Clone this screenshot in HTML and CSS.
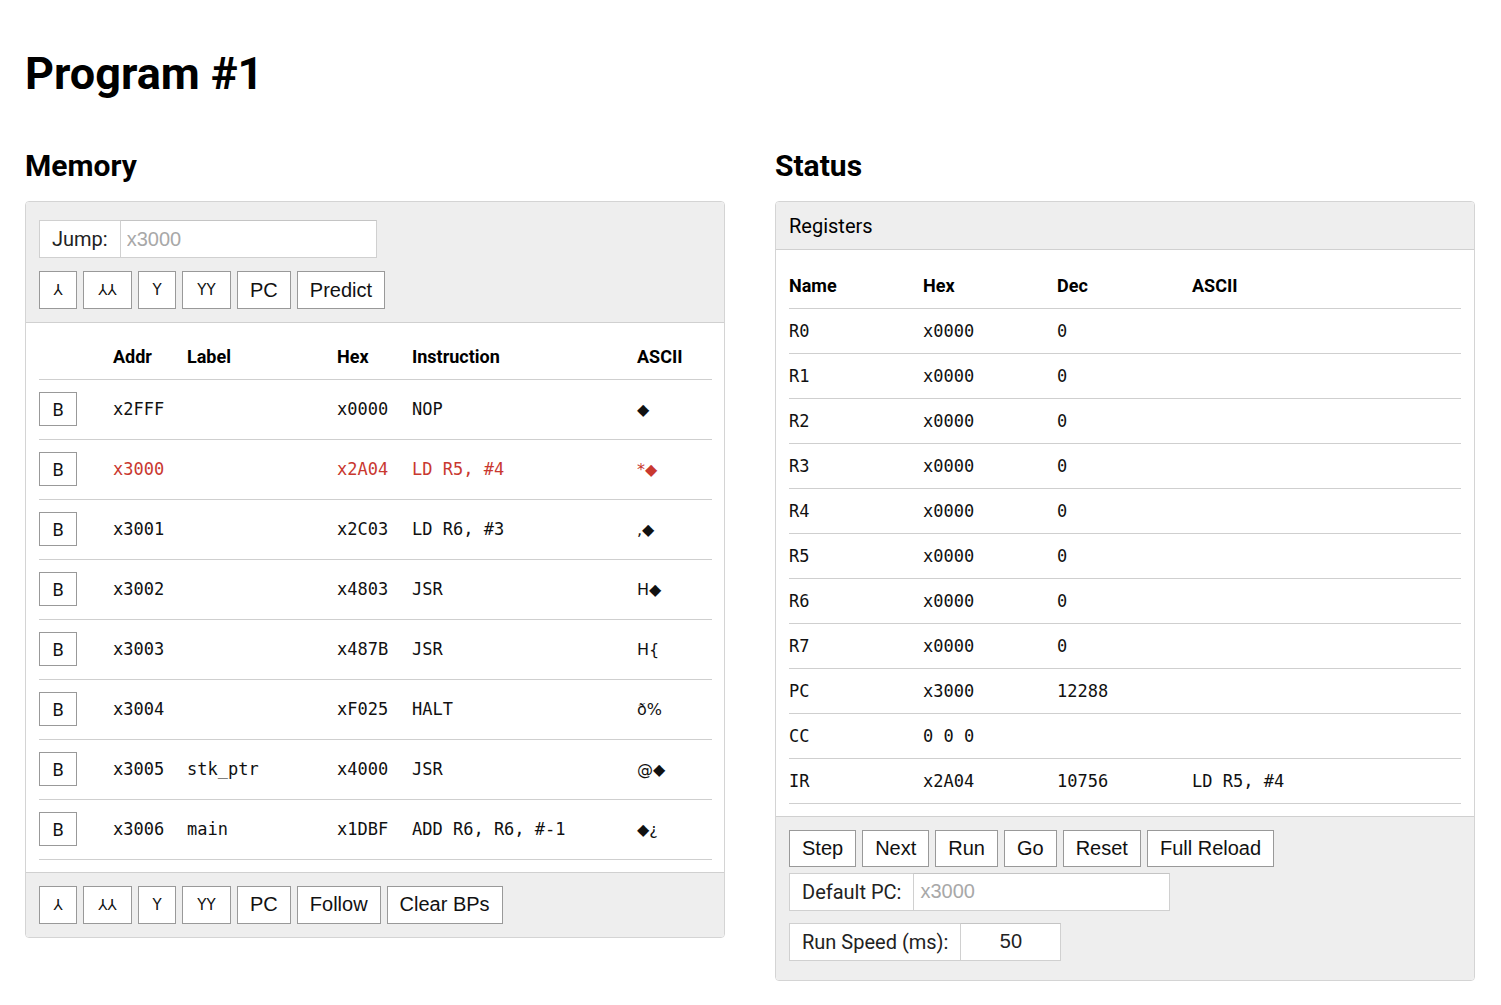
FILE: index.html
```html
<!DOCTYPE html>
<html>
<head>
<meta charset="utf-8">
<link rel="stylesheet" href="styles.css">
</head>
<body>
<h1 class="title">Program #1</h1>
<div class="cols">
  <section class="col">
    <h2 class="heading">Memory</h2>
    <div class="panel">
      <div class="panel-top">
        <div class="group">
          <span class="group-label">Jump:</span>
          <input class="group-input" placeholder="x3000">
        </div>
        <div class="btnrow">
          <button class="btn sym">⅄</button><button class="btn sym wide">⅄⅄</button><button class="btn sym">Y</button><button class="btn sym wide">YY</button><button class="btn">PC</button><button class="btn">Predict</button>
        </div>
      </div>
      <div class="panel-body mem-body">
        <table class="mem">
          <colgroup><col class="c-b"><col class="c-addr"><col class="c-label"><col class="c-hex"><col class="c-ins"><col class="c-asc"></colgroup>
          <thead><tr><th></th><th>Addr</th><th>Label</th><th>Hex</th><th>Instruction</th><th>ASCII</th></tr></thead>
          <tbody>
            <tr><td><button class="bp">B</button></td><td>x2FFF</td><td></td><td>x0000</td><td>NOP</td><td class="asc">◆</td></tr>
            <tr class="cur"><td><button class="bp">B</button></td><td>x3000</td><td></td><td>x2A04</td><td>LD R5, #4</td><td class="asc">*◆</td></tr>
            <tr><td><button class="bp">B</button></td><td>x3001</td><td></td><td>x2C03</td><td>LD R6, #3</td><td class="asc">,◆</td></tr>
            <tr><td><button class="bp">B</button></td><td>x3002</td><td></td><td>x4803</td><td>JSR</td><td class="asc">H◆</td></tr>
            <tr><td><button class="bp">B</button></td><td>x3003</td><td></td><td>x487B</td><td>JSR</td><td class="asc">H{</td></tr>
            <tr><td><button class="bp">B</button></td><td>x3004</td><td></td><td>xF025</td><td>HALT</td><td class="asc">ð%</td></tr>
            <tr><td><button class="bp">B</button></td><td>x3005</td><td>stk_ptr</td><td>x4000</td><td>JSR</td><td class="asc">@◆</td></tr>
            <tr><td><button class="bp">B</button></td><td>x3006</td><td>main</td><td>x1DBF</td><td>ADD R6, R6, #-1</td><td class="asc">◆¿</td></tr>
          </tbody>
        </table>
      </div>
      <div class="panel-foot">
        <div class="btnrow">
          <button class="btn sym">⅄</button><button class="btn sym wide">⅄⅄</button><button class="btn sym">Y</button><button class="btn sym wide">YY</button><button class="btn">PC</button><button class="btn">Follow</button><button class="btn">Clear BPs</button>
        </div>
      </div>
    </div>
  </section>
  <section class="col">
    <h2 class="heading">Status</h2>
    <div class="panel">
      <div class="panel-head">Registers</div>
      <div class="panel-body reg-body">
        <table class="reg">
          <colgroup><col class="r1"><col class="r2"><col class="r3"><col></colgroup>
          <thead><tr><th>Name</th><th>Hex</th><th>Dec</th><th>ASCII</th></tr></thead>
          <tbody>
            <tr><td>R0</td><td>x0000</td><td>0</td><td></td></tr>
            <tr><td>R1</td><td>x0000</td><td>0</td><td></td></tr>
            <tr><td>R2</td><td>x0000</td><td>0</td><td></td></tr>
            <tr><td>R3</td><td>x0000</td><td>0</td><td></td></tr>
            <tr><td>R4</td><td>x0000</td><td>0</td><td></td></tr>
            <tr><td>R5</td><td>x0000</td><td>0</td><td></td></tr>
            <tr><td>R6</td><td>x0000</td><td>0</td><td></td></tr>
            <tr><td>R7</td><td>x0000</td><td>0</td><td></td></tr>
            <tr><td>PC</td><td>x3000</td><td>12288</td><td></td></tr>
            <tr><td>CC</td><td>0 0 0</td><td></td><td></td></tr>
            <tr><td>IR</td><td>x2A04</td><td>10756</td><td>LD R5, #4</td></tr>
          </tbody>
        </table>
      </div>
      <div class="panel-foot status-foot">
        <div class="btnrow">
          <button class="btn">Step</button><button class="btn">Next</button><button class="btn">Run</button><button class="btn">Go</button><button class="btn">Reset</button><button class="btn">Full Reload</button>
        </div>
        <div class="group">
          <span class="group-label">Default PC:</span>
          <input class="group-input" placeholder="x3000">
        </div>
        <div class="group speed">
          <span class="group-label">Run Speed (ms):</span>
          <input class="group-input small" value="50">
        </div>
      </div>
    </div>
  </section>
</div>
</body>
</html>
```
FILE: styles.css
```css
* { box-sizing: border-box; }
body {
  margin: 0;
  padding: 0 25px;
  font-family: Roboto, "Liberation Sans", sans-serif;
  color: #000;
  background: #fff;
}
.title {
  font-size: 45px;
  font-weight: 700;
  margin: 47px 0 0 0;
  line-height: 54px;
}
.cols {
  display: grid;
  grid-template-columns: 700px 700px;
  column-gap: 50px;
  margin-top: 47px;
}
.heading {
  font-size: 30px;
  font-weight: 700;
  margin: 0 0 17px 0;
  line-height: 36px;
}
.panel {
  border: 1px solid #d4d4d4;
  border-radius: 4px;
  background: #fff;
  overflow: hidden;
}
.panel-top {
  background: #eeeeee;
  padding: 18px 13px 13px;
  border-bottom: 1px solid #d0d0d0;
}
.panel-head {
  background: #eeeeee;
  height: 48px;
  padding: 0 13px;
  display: flex;
  align-items: center;
  font-size: 20px;
  border-bottom: 1px solid #d0d0d0;
}
.group {
  display: flex;
  height: 38px;
}
.group-label {
  display: flex;
  align-items: center;
  padding: 0 12px;
  background: #fff;
  border: 1px solid #d0d0d0;
  border-right: none;
  font-size: 20px;
  color: #222;
}
.group-input {
  width: 257px;
  height: 38px;
  border: 1px solid #d0d0d0;
  border-top-color: #c4c4c4;
  padding: 0 6px;
  font-family: "Liberation Sans", Arial, sans-serif;
  font-size: 20px;
  color: #222;
  background: #fff;
  outline: none;
}
.group-input::placeholder { color: #a8a8a8; }
.group-input.small {
  width: 101px;
  text-align: center;
}
.btnrow {
  display: flex;
  gap: 6px;
  margin-top: 13px;
}
.btn {
  height: 38px;
  min-width: 38px;
  padding: 0 12px;
  background: #fff;
  border: 1px solid #999;
  border-radius: 0;
  font-family: "Liberation Sans", Arial, sans-serif;
  font-size: 20px;
  color: #111;
  display: flex;
  align-items: center;
  justify-content: center;
}
.btn.sym {
  width: 38px;
  padding: 0;
  font-family: "DejaVu Sans", sans-serif;
  font-size: 15px;
}
.btn.sym.wide { width: 49px; }
.panel-body {
  padding: 0 13px 13px;
}
.mem-body { padding-bottom: 12px; }
table {
  border-collapse: collapse;
  width: 100%;
  table-layout: fixed;
}
.mem col.c-b { width: 74px; }
.mem col.c-addr { width: 74px; }
.mem col.c-label { width: 150px; }
.mem col.c-hex { width: 75px; }
.mem col.c-ins { width: 225px; }
.mem col.c-asc { width: 75px; }
th {
  text-align: left;
  font-weight: 700;
  font-size: 18px;
  padding: 0;
}
.mem thead tr { height: 56px; }
.mem thead th { padding-top: 12px; vertical-align: middle; }
.mem thead tr, .reg thead tr { border-bottom: 1px solid #cfcfcf; }
.mem tbody tr {
  height: 60px;
  border-bottom: 1px solid #cfcfcf;
}
td {
  padding: 0;
  font-family: "DejaVu Sans Mono", monospace;
  font-size: 17px;
  color: #111;
  vertical-align: middle;
  white-space: pre;
}
td.asc {
  font-family: "DejaVu Sans", sans-serif;
  font-size: 16px;
}
.mem tr.cur td { color: #c9382f; }
.bp {
  width: 38px;
  height: 34px;
  background: #fff;
  border: 1px solid #999;
  font-family: Roboto, "Liberation Sans", sans-serif;
  font-size: 18px;
  color: #111;
  padding: 0;
  display: block;
}
.panel-foot {
  background: #eeeeee;
  padding: 0 13px 13px;
  border-top: 1px solid #d0d0d0;
}
.reg-body { padding-bottom: 12px; }
.reg col.r1 { width: 134px; }
.reg col.r2 { width: 134px; }
.reg col.r3 { width: 135px; }
.reg thead tr { height: 58px; }
.reg thead th { padding-top: 13px; }
.reg tbody tr {
  height: 45px;
  border-bottom: 1px solid #cfcfcf;
}
.status-foot { padding-bottom: 19px; }
.status-foot .btnrow .btn { height: 37px; }
.status-foot .group { margin-top: 6px; }
.status-foot .group.speed { margin-top: 12px; }
```
